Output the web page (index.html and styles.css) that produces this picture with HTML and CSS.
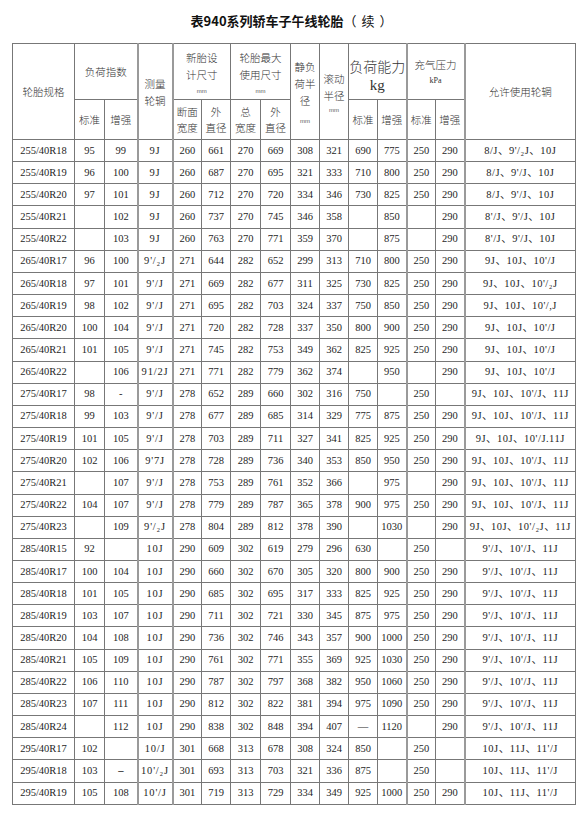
FILE: index.html
```html
<!DOCTYPE html>
<html lang="zh">
<head>
<meta charset="utf-8">
<title>表940系列轿车子午线轮胎（续）</title>
<link rel="stylesheet" href="styles.css">
</head>
<body>
<div class="page">
  <h1 class="title"><span class="title-main">表940系列轿车子午线轮胎</span><span class="title-cont">（ 续 ）</span></h1>
  <table class="tyres">
    <colgroup>
      <col class="w62"><col class="w30"><col class="w33"><col class="w35">
      <col class="w29"><col class="w29"><col class="w30"><col class="w30">
      <col class="w29"><col class="w29"><col class="w29"><col class="w29">
      <col class="w29"><col class="w29"><col class="w111">
    </colgroup>
    <thead>
      <tr class="h1">
        <th rowspan="2">轮胎规格</th>
        <th colspan="2" class="up">负荷指数</th>
        <th rowspan="2" class="thick">测量<br>轮辋</th>
        <th colspan="2" class="thick ml">新胎设<br>计尺寸<span class="mm mm-b">mm</span></th>
        <th colspan="2" class="ml">轮胎最大<br>使用尺寸<span class="mm mm-b">mm</span></th>
        <th rowspan="2" class="ml2">静负<br>荷半<br>径<span class="mm mm-c">mm</span></th>
        <th rowspan="2" class="ml3">滚动<br>半径<span class="mm mm-d">mm</span></th>
        <th colspan="2" class="big">负荷能力<br><span class="kg">kg</span></th>
        <th colspan="2" class="thick press">充气压力<span class="kpa">kPa</span></th>
        <th rowspan="2" class="thick">允许使用轮辋</th>
      </tr>
      <tr class="h2">
        <th>标准</th><th>增强</th>
        <th class="thick ml">断面<br>宽度</th><th class="ml">外<br>直径</th>
        <th class="ml">总<br>宽度</th><th class="ml">外<br>直径</th>
        <th>标准</th><th>增强</th>
        <th class="thick">标准</th><th>增强</th>
      </tr>
    </thead>
    <tbody>
      <tr><td>255/40R18</td><td>95</td><td>99</td><td class="thick">9J</td><td class="thick">260</td><td>661</td><td>270</td><td>669</td><td>308</td><td>321</td><td>690</td><td>775</td><td class="thick">250</td><td>290</td><td class="thick">8/J、9'/₂J、10J</td></tr>
      <tr><td>255/40R19</td><td>96</td><td>100</td><td class="thick">9J</td><td class="thick">260</td><td>687</td><td>270</td><td>695</td><td>321</td><td>333</td><td>710</td><td>800</td><td class="thick">250</td><td>290</td><td class="thick">8/J、9'/J、10J</td></tr>
      <tr><td>255/40R20</td><td>97</td><td>101</td><td class="thick">9J</td><td class="thick">260</td><td>712</td><td>270</td><td>720</td><td>334</td><td>346</td><td>730</td><td>825</td><td class="thick">250</td><td>290</td><td class="thick">8/J、9'/J、10J</td></tr>
      <tr><td>255/40R21</td><td></td><td>102</td><td class="thick">9J</td><td class="thick">260</td><td>737</td><td>270</td><td>745</td><td>346</td><td>358</td><td></td><td>850</td><td class="thick"></td><td>290</td><td class="thick">8'/J、9'/J、10J</td></tr>
      <tr><td>255/40R22</td><td></td><td>103</td><td class="thick">9J</td><td class="thick">260</td><td>763</td><td>270</td><td>771</td><td>359</td><td>370</td><td></td><td>875</td><td class="thick"></td><td>290</td><td class="thick">8'/J、9'/J、10J</td></tr>
      <tr><td>265/40R17</td><td>96</td><td>100</td><td class="thick">9'/₂J</td><td class="thick">271</td><td>644</td><td>282</td><td>652</td><td>299</td><td>313</td><td>710</td><td>800</td><td class="thick">250</td><td>290</td><td class="thick">9J、10J、10'/J</td></tr>
      <tr><td>265/40R18</td><td>97</td><td>101</td><td class="thick">9'/J</td><td class="thick">271</td><td>669</td><td>282</td><td>677</td><td>311</td><td>325</td><td>730</td><td>825</td><td class="thick">250</td><td>290</td><td class="thick">9J、10J、10'/₂J</td></tr>
      <tr><td>265/40R19</td><td>98</td><td>102</td><td class="thick">9'/J</td><td class="thick">271</td><td>695</td><td>282</td><td>703</td><td>324</td><td>337</td><td>750</td><td>850</td><td class="thick">250</td><td>290</td><td class="thick">9J、10J、10'/,J</td></tr>
      <tr><td>265/40R20</td><td>100</td><td>104</td><td class="thick">9'/J</td><td class="thick">271</td><td>720</td><td>282</td><td>728</td><td>337</td><td>350</td><td>800</td><td>900</td><td class="thick">250</td><td>290</td><td class="thick">9J、10J、10'/J</td></tr>
      <tr><td>265/40R21</td><td>101</td><td>105</td><td class="thick">9'/J</td><td class="thick">271</td><td>745</td><td>282</td><td>753</td><td>349</td><td>362</td><td>825</td><td>925</td><td class="thick">250</td><td>290</td><td class="thick">9J、10J、10'/J</td></tr>
      <tr><td>265/40R22</td><td></td><td>106</td><td class="thick">91/2J</td><td class="thick">271</td><td>771</td><td>282</td><td>779</td><td>362</td><td>374</td><td></td><td>950</td><td class="thick"></td><td>290</td><td class="thick">9J、10J、10'/J</td></tr>
      <tr><td>275/40R17</td><td>98</td><td>-</td><td class="thick">9'/J</td><td class="thick">278</td><td>652</td><td>289</td><td>660</td><td>302</td><td>316</td><td>750</td><td></td><td class="thick">250</td><td></td><td class="thick">9J、10J、10'/J、11J</td></tr>
      <tr><td>275/40R18</td><td>99</td><td>103</td><td class="thick">9'/J</td><td class="thick">278</td><td>677</td><td>289</td><td>685</td><td>314</td><td>329</td><td>775</td><td>875</td><td class="thick">250</td><td>290</td><td class="thick">9J、10J、10'/J、11J</td></tr>
      <tr><td>275/40R19</td><td>101</td><td>105</td><td class="thick">9'/J</td><td class="thick">278</td><td>703</td><td>289</td><td>711</td><td>327</td><td>341</td><td>825</td><td>925</td><td class="thick">250</td><td>290</td><td class="thick">9J、10J、10'/J.11J</td></tr>
      <tr><td>275/40R20</td><td>102</td><td>106</td><td class="thick">9'7J</td><td class="thick">278</td><td>728</td><td>289</td><td>736</td><td>340</td><td>353</td><td>850</td><td>950</td><td class="thick">250</td><td>290</td><td class="thick">9J、10J、10'/J、11J</td></tr>
      <tr><td>275/40R21</td><td></td><td>107</td><td class="thick">9'/J</td><td class="thick">278</td><td>753</td><td>289</td><td>761</td><td>352</td><td>366</td><td></td><td>975</td><td class="thick"></td><td>290</td><td class="thick">9J、10J、10'/J、11J</td></tr>
      <tr><td>275/40R22</td><td>104</td><td>107</td><td class="thick">9'/J</td><td class="thick">278</td><td>779</td><td>289</td><td>787</td><td>365</td><td>378</td><td>900</td><td>975</td><td class="thick">250</td><td>290</td><td class="thick">9J、10J、10'/J、11J</td></tr>
      <tr><td>275/40R23</td><td></td><td>109</td><td class="thick">9'/₂J</td><td class="thick">278</td><td>804</td><td>289</td><td>812</td><td>378</td><td>390</td><td></td><td>1030</td><td class="thick"></td><td>290</td><td class="thick">9J、10J、10'/₂J、11J</td></tr>
      <tr><td>285/40R15</td><td>92</td><td></td><td class="thick">10J</td><td class="thick">290</td><td>609</td><td>302</td><td>619</td><td>279</td><td>296</td><td>630</td><td></td><td class="thick">250</td><td></td><td class="thick">9'/J、10'/J、11J</td></tr>
      <tr><td>285/40R17</td><td>100</td><td>104</td><td class="thick">10J</td><td class="thick">290</td><td>660</td><td>302</td><td>670</td><td>305</td><td>320</td><td>800</td><td>900</td><td class="thick">250</td><td>290</td><td class="thick">9'/J、10'/J、11J</td></tr>
      <tr><td>285/40R18</td><td>101</td><td>105</td><td class="thick">10J</td><td class="thick">290</td><td>685</td><td>302</td><td>695</td><td>317</td><td>333</td><td>825</td><td>925</td><td class="thick">250</td><td>290</td><td class="thick">9'/J、10'/J、11J</td></tr>
      <tr><td>285/40R19</td><td>103</td><td>107</td><td class="thick">10J</td><td class="thick">290</td><td>711</td><td>302</td><td>721</td><td>330</td><td>345</td><td>875</td><td>975</td><td class="thick">250</td><td>290</td><td class="thick">9'/J、10'/J、11J</td></tr>
      <tr><td>285/40R20</td><td>104</td><td>108</td><td class="thick">10J</td><td class="thick">290</td><td>736</td><td>302</td><td>746</td><td>343</td><td>357</td><td>900</td><td>1000</td><td class="thick">250</td><td>290</td><td class="thick">9'/J、10'/J、11J</td></tr>
      <tr><td>285/40R21</td><td>105</td><td>109</td><td class="thick">10J</td><td class="thick">290</td><td>761</td><td>302</td><td>771</td><td>355</td><td>369</td><td>925</td><td>1030</td><td class="thick">250</td><td>290</td><td class="thick">9'/J、10'/J、11J</td></tr>
      <tr><td>285/40R22</td><td>106</td><td>110</td><td class="thick">10J</td><td class="thick">290</td><td>787</td><td>302</td><td>797</td><td>368</td><td>382</td><td>950</td><td>1060</td><td class="thick">250</td><td>290</td><td class="thick">9'/J、10'/J、11J</td></tr>
      <tr><td>285/40R23</td><td>107</td><td>111</td><td class="thick">10J</td><td class="thick">290</td><td>812</td><td>302</td><td>822</td><td>381</td><td>394</td><td>975</td><td>1090</td><td class="thick">250</td><td>290</td><td class="thick">9'/J、10'/J、11J</td></tr>
      <tr><td>285/40R24</td><td></td><td>112</td><td class="thick">10J</td><td class="thick">290</td><td>838</td><td>302</td><td>848</td><td>394</td><td>407</td><td class="dash">—</td><td>1120</td><td class="thick"></td><td>290</td><td class="thick">9'/J、10'/J、11J</td></tr>
      <tr><td>295/40R17</td><td>102</td><td></td><td class="thick">10/J</td><td class="thick">301</td><td>668</td><td>313</td><td>678</td><td>308</td><td>324</td><td>850</td><td></td><td class="thick">250</td><td></td><td class="thick">10J、11J、11'/J</td></tr>
      <tr><td>295/40R18</td><td>103</td><td class="bdash">–</td><td class="thick">10'/₂J</td><td class="thick">301</td><td>693</td><td>313</td><td>703</td><td>321</td><td>336</td><td>875</td><td></td><td class="thick">250</td><td></td><td class="thick">10J、11J、11'/J</td></tr>
      <tr><td>295/40R19</td><td>105</td><td>108</td><td class="thick">10'/J</td><td class="thick">301</td><td>719</td><td>313</td><td>729</td><td>334</td><td>349</td><td>925</td><td>1000</td><td class="thick">250</td><td>290</td><td class="thick">10J、11J、11'/J</td></tr>
    </tbody>
  </table>
</div>
</body>
</html>
```

FILE: styles.css
```css
html, body {
  margin: 0;
  padding: 0;
  background: #ffffff;
}

.page {
  width: 584px;
  padding: 0 0 0 12px;
  box-sizing: border-box;
  color: #1e1e1e;
  font-family: "Liberation Serif", "Noto Sans CJK SC", serif;
}

.title {
  margin: 0 0 0 -12px;
  width: 584px;
  height: 43px;
  line-height: 42px;
  text-align: center;
  font-size: 13px;
  font-weight: 700;
  font-family: "Noto Sans CJK SC", "DejaVu Sans", sans-serif;
  color: #111;
  box-sizing: border-box;
}

.title-cont {
  font-weight: 400;
  letter-spacing: 1px;
}

.tyres {
  border-collapse: collapse;
  table-layout: fixed;
  width: 563px;
  border: 1px solid #555;
}

.w62 { width: 62px; }
.w30 { width: 30px; }
.w33 { width: 33px; }
.w35 { width: 35px; }
.w29 { width: 29px; }
.w111 { width: 111px; }

.tyres th,
.tyres td {
  border: 1px solid #777;
  padding: 0;
  text-align: center;
  vertical-align: middle;
  overflow: hidden;
  white-space: nowrap;
}

.tyres th {
  font-weight: 300;
  font-size: 10.5px;
  line-height: 17px;
  font-family: "Noto Sans CJK SC", "Liberation Serif", sans-serif;
  color: #333;
}

.tyres td {
  font-size: 10.5px;
  line-height: 12px;
  color: #1e1e1e;
}

.tyres tbody td:nth-child(4) { letter-spacing: 0.8px; }
.tyres tbody td:nth-child(15) { letter-spacing: 0.5px; }

.tyres .thick {
  border-left: 2px solid #9a9a9a;
}

.h1 { height: 56px; }
.h2 { height: 40px; }
.tyres tbody tr { height: 22.17px; }

.h2 th { line-height: 16px; }

.ml { line-height: 17px; padding-top: 3px; }
.h2 .ml { padding-top: 0; }
.ml2 { line-height: 18px; padding-top: 8px; }
.ml3 { line-height: 15px; padding-bottom: 4px; }

.up { padding-bottom: 2px; }

.mm {
  display: block;
  font-size: 6px;
  line-height: 8px;
  font-family: "Liberation Sans", sans-serif;
  color: #555;
}
.mm-b { margin-top: 4px; }
.mm-c { margin-top: 8px; }
.mm-d { margin-top: 2px; }

.big {
  font-size: 14px !important;
  line-height: 18px !important;
  padding-top: 8px !important;
}

.kg {
  font-family: "Liberation Serif", serif;
  font-size: 15px;
}

.press {
  padding-bottom: 2px !important;
}

.kpa {
  display: block;
  margin-top: 3px;
  font-family: "Liberation Serif", serif;
  font-size: 8px;
  line-height: 10px;
}

.dash {
  font-size: 8px;
  color: #555;
}

.bdash {
  font-weight: 700;
  font-size: 13px;
}
```
